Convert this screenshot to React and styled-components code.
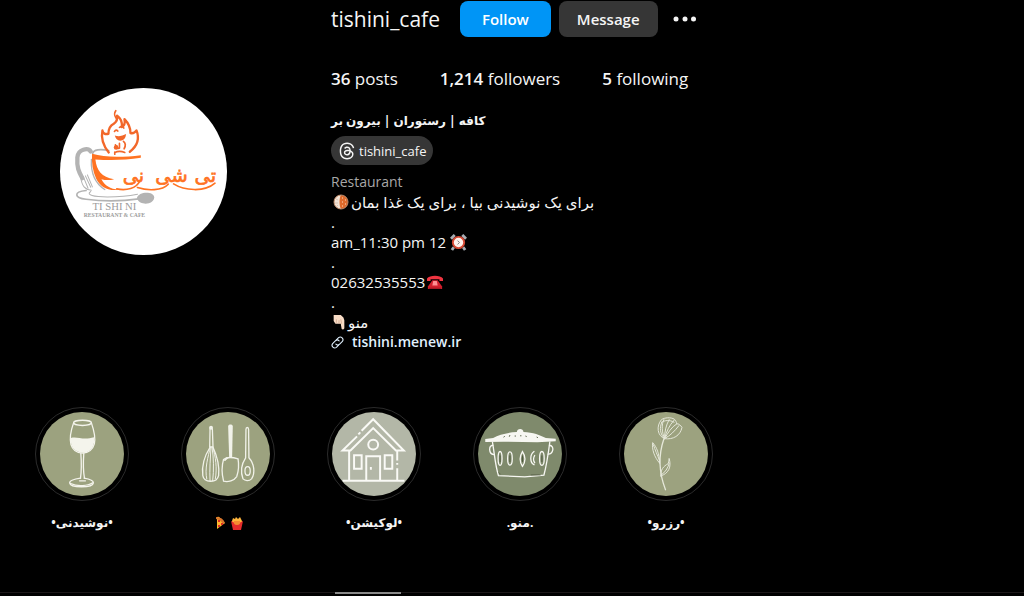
import React from "react";
import styled, { createGlobalStyle } from "styled-components";
import { FaThreads } from "react-icons/fa6";

const GlobalStyle = createGlobalStyle`
  * {
    box-sizing: border-box;
  }

  body {
    margin: 0;
    background: #000;
    color: #f5f5f5;
    font-family: "Open Sans", "Noto Sans", "DejaVu Sans", sans-serif;
    font-size: 15px;
    line-height: 20px;
  }
`;

const Page = styled.main`
  overflow: hidden;
`;

const Header = styled.header`
  display: flex;
  align-items: flex-start;
  padding-top: 1px;
`;

const AvatarColumn = styled.div`
  flex: 0 0 286px;
  display: flex;
  justify-content: center;
  margin: 87px 45px 0 0;
`;

const Avatar = styled.svg`
  width: 167px;
  height: 167px;
  border-radius: 50%;
  background: #fff;
`;

const Info = styled.section`
  flex: 1;
  min-width: 0;
`;

const TitleRow = styled.div`
  display: flex;
  align-items: center;
`;

const Username = styled.h2`
  margin: 0 20px 0 0;
  font-size: 21px;
  font-weight: 400;
  line-height: 36px;
`;

const Button = styled.button`
  height: 36px;
  margin-right: 8px;
  padding: 0 ${(props) => (props.$primary ? 22 : 18)}px;
  border: 0;
  border-radius: 8px;
  background: ${(props) => (props.$primary ? "#0095f6" : "#363636")};
  color: ${(props) => (props.$primary ? "#fff" : "#f5f5f5")};
  font: inherit;
  font-weight: 600;
  cursor: pointer;
`;

const MoreButton = styled.button`
  display: flex;
  align-items: center;
  height: 36px;
  padding: 0 6px;
  border: 0;
  background: none;
  color: #f5f5f5;
  cursor: pointer;
`;

const Stats = styled.ul`
  display: flex;
  gap: 42px;
  margin: 32px 0 0;
  padding: 0;
  list-style: none;
  font-size: 17px;
  line-height: 20px;
`;

const Count = styled.span`
  font-weight: 600;
`;

const Bio = styled.div`
  display: flex;
  flex-direction: column;
  align-items: flex-start;
  margin-top: 22px;
`;

const DisplayName = styled.h1`
  margin: 0;
  font-size: 12px;
  font-weight: 700;
  line-height: 20px;
`;

const ThreadsPill = styled.a`
  display: flex;
  align-items: center;
  gap: 3px;
  height: 29px;
  margin: 5px 0 7px;
  padding: 0 7px;
  border-radius: 15px;
  background: #363636;
  color: #f5f5f5;
  font-size: 13px;
  text-decoration: none;
`;

const Category = styled.div`
  color: #a8a8a8;
  font-size: 14px;
`;

const Line = styled.div`
  display: flex;
  align-items: center;
  gap: ${(props) => props.$gap || 2}px;
  height: 20px;
`;

const Emoji = styled.svg`
  flex: none;
  width: ${(props) => props.$size || 18}px;
  height: ${(props) => props.$size || 18}px;
`;

const SiteLink = styled.a`
  display: flex;
  align-items: center;
  gap: 8px;
  color: #e0f1ff;
  font-size: 14px;
  font-weight: 600;
  text-decoration: none;
`;

const Highlights = styled.ul`
  display: flex;
  margin: 55px 0 0;
  padding: 0 9px;
  list-style: none;
`;

const Highlight = styled.li`
  flex: 0 0 146px;
`;

const HighlightLink = styled.a`
  display: flex;
  flex-direction: column;
  align-items: center;
  gap: 12px;
  color: #f5f5f5;
  font-size: 12px;
  font-weight: 700;
  text-decoration: none;
`;

const Ring = styled.span`
  display: flex;
  padding: 4px;
  border: 1px solid #2b2b2b;
  border-radius: 50%;
`;

const Cover = styled.svg`
  width: 84px;
  height: 84px;
  border-radius: 50%;
  background: ${(props) => props.$color};
`;

const Label = styled.span`
  display: flex;
  align-items: center;
  gap: 3px;
  height: 20px;
`;

const Tabs = styled.nav`
  display: flex;
  margin-top: 59px;
  padding-left: 335px;
  border-top: 1px solid #1c1819;
`;

const ActiveTab = styled.span`
  width: 66px;
  height: 2px;
  margin-top: -1px;
  background: #8a8a8a;
`;

const Logo = () => (
  <Avatar viewBox="30 24 500 500" role="img" aria-label="tishini_cafe">
    <g fill="none" stroke="#b3b3b3" strokeLinecap="round">
      <path d="M122 214c-8-12-38-8-40 18-2 30 4 42 15 62" strokeWidth="13" />
      <path d="M92 292c4 26 12 36 32 38M100 290l14 34M106 287l16 34M112 284l15 36" strokeWidth="3" />
      <path d="M128 220c2-12 22-14 48-9" strokeWidth="5" />
      <path d="M124 238c-2 40 12 72 40 90" strokeWidth="4" />
      <path d="M108 331c-38 4-36 22 0 26 44 6 110 6 158-1" strokeWidth="5" />
      <path d="M122 334c-16 10 10 16 50 16 34 0 60-2 90-8" strokeWidth="3" />
    </g>
    <path d="M260 354c4-20 50-22 52-3 0 22-42 28-52 3z" fill="#b3b3b3" />
    <path
      d="M126 221c40 12 96 10 146 4v8c-46 7-90 8-136 5 4 34 18 52 56 59-14 4-26 3-38 0 10 20 26 28 52 32-36 4-56-10-68-34-10-22-14-48-12-74z"
      fill="#ff7322"
    />
    <g fill="none" stroke="#f2672a" strokeLinecap="round" strokeLinejoin="round">
      <path
        d="M176 217c-16-20-24-42-19-66 2 10 8 12 18 10 0-16 4-24 16-30 8-6 12-14 10-24 14 10 16 20 14 34 8-4 10-14 8-24 12 12 18 26 18 42 8 2 14-2 18-8 12 30-2 50-20 64"
        strokeWidth="7"
      />
      <path d="M197 92c-8 12-2 16 2 24" strokeWidth="5" />
      <path d="M193 154q5-7 10-1M208 142q8-5 13 2" strokeWidth="5" />
      <path d="M196 194q6 14 12 10v-14M220 184q10 8 2 22M194 217q14-6 30 0M194 216v6" strokeWidth="5" />
    </g>
    <path d="M194 166q16 6 34-4-2 20-18 20-12-2-16-16z" fill="#f2672a" />
    <circle cx="198" cy="202" r="7" fill="#f2672a" />
    <g fill="none" stroke="#ff7322" strokeLinecap="round" strokeWidth="5">
      <path d="M200 326c30 6 58-2 68-22" />
      <path d="M262 322c30 10 74 10 92-10M370 311c32 20 92 26 124-2" />
    </g>
    <g
      fill="#ff7322"
      stroke="#ff7322"
      strokeWidth="2"
      fontFamily="DejaVu Sans, sans-serif"
      fontSize="58"
      textAnchor="middle"
    >
      <text x="250" y="306">نی</text>
      <text x="364" y="306">شی</text>
      <text x="465" y="306">تی</text>
    </g>
    <g fill="#9b9b9b" fontFamily="Liberation Serif, serif" textAnchor="middle">
      <text x="193" y="390" fontSize="32">TI SHI NI</text>
      <text x="193" y="409" fontSize="17" fontWeight="700">RESTAURANT &amp; CAFE</text>
    </g>
  </Avatar>
);

const MoonCake = () => (
  <Emoji viewBox="0 0 18 18" aria-hidden="true">
    <circle cx="10" cy="9" r="7" fill="#dd6a2c" />
    <path d="M10 2a7 7 0 0 0 0 14c-2-3-2-11 0-14z" fill="#f3e4d7" />
    <path d="M5 6l2 1M4 10h3M6 13l1-1" stroke="#d9c3b2" />
    <path d="M11 5h1M14 7h1M11 9h1M14 11h1M11 13h1" stroke="#ffd9bd" />
    <circle cx="10" cy="9" r="7" fill="none" stroke="#b98a6c" />
  </Emoji>
);

const AlarmClock = () => (
  <Emoji viewBox="0 0 18 18" $size={17} aria-hidden="true">
    <path d="M1 5l4-4M17 5l-4-4M4 14l-2 3M14 14l2 3" stroke="#a8adb3" strokeWidth="3" />
    <circle cx="9" cy="9" r="6" fill="#fff3ee" stroke="#d64a35" strokeWidth="2" />
    <path d="M8 7l2 2-2 2" fill="none" stroke="#777" />
  </Emoji>
);

const Telephone = () => (
  <Emoji viewBox="0 0 18 18" $size={16} aria-hidden="true">
    <path d="M0 8V5c3-4 15-4 18 0v3h-4V6H4v2z" fill="#ef3440" />
    <path d="M6 7h6l5 7v3H1v-3z" fill="#d31e2c" />
    <path d="M7 8h4l1 5H6z" fill="#ff8d91" />
    <path d="M2 16h14" stroke="#8f1420" />
  </Emoji>
);

const PointDown = () => (
  <Emoji viewBox="0 0 16 18" $size={16} aria-hidden="true">
    <path d="M2 1h8l3 3 1 3v9q-1 2-3 1l-1-6H4L2 8z" fill="#f8dcc6" />
    <path d="M5 6v4M8 7v4M10 6l1 5" stroke="#d3ab90" fill="none" />
  </Emoji>
);

const Pizza = () => (
  <Emoji viewBox="0 0 14 14" $size={14} aria-hidden="true">
    <path d="M4 1q2-1 3 1l5 5-8 6z" fill="#ffb62e" />
    <path d="M3 1q7 0 9 6l-2 1Q8 4 3 3z" fill="#d9752c" />
    <path d="M5 4h2v2H5zM8 7h2v2H8zM5 9h2v2H5z" fill="#dc2c24" />
  </Emoji>
);

const Fries = () => (
  <Emoji viewBox="0 0 14 14" $size={14} aria-hidden="true">
    <path d="M2 5l1-3 2 1 1-2 2 2 2-2 1 2 1 2v3H2z" fill="#ffb53c" />
    <path d="M1 5q6 4 12 0l-2 9H3z" fill="#e62c2c" />
    <path d="M4 5h6q1 4-3 4T4 5z" fill="#f58b31" />
  </Emoji>
);

const ChainIcon = () => (
  <svg width="13" height="13" viewBox="0 0 24 24" fill="none" stroke="currentColor" aria-hidden="true">
    <g strokeWidth="2" strokeLinecap="round" strokeLinejoin="round">
      <path d="M10 7l4-4a5 5 0 0 1 7 7l-5 5a5 5 0 0 1-7 0" />
      <path d="M14 17l-4 4a5 5 0 0 1-7-7l5-5a5 5 0 0 1 7 0" />
    </g>
  </svg>
);

const WineGlass = () => (
  <Cover viewBox="30 33 255 255" $color="#9ca27f" aria-hidden="true">
    <g fill="none" stroke="#f4f4ec" strokeWidth="4" strokeLinecap="round">
      <ellipse cx="159" cy="66" rx="27" ry="8" />
      <path d="M132 66c-8 22-12 50-8 66 5 17 19 25 35 26 18-1 32-12 36-28 4-18-2-44-9-64" />
      <path d="M154 158c2 28 2 54-1 76M163 158c-2 28-2 54 2 76" />
      <path d="M153 234c-14 2-33 5-33 14 2 16 70 16 72 0 0-9-16-12-28-14" />
      <path d="M123 250c20 10 52 8 67-2M150 242h18" />
    </g>
    <path d="M124 112c18-6 36 8 70-2 4 32-14 46-35 47-24-3-38-19-35-45z" fill="#f4f4ec" />
  </Cover>
);

const Utensils = () => (
  <Cover viewBox="30 33 255 255" $color="#9ca27f" aria-hidden="true">
    <g fill="none" stroke="#f1f2e9" strokeWidth="3" strokeLinecap="round">
      <path d="M103 84l-1 55M110 84l2 55M103 139h9" strokeWidth="4" />
      <path d="M103 140c-14 22-26 55-22 86 4 22 42 24 48 0 3-30-5-60-17-86" strokeWidth="4" />
      <path d="M104 140c-7 28-18 66-11 96M106 140c-2 30-5 70-3 102M109 140c5 30 6 70 2 102M111 140c9 28 14 64 8 96" />
      <path d="M144 177c10-8 30-6 44-2 3 18 2 36-4 54-8 12-26 18-40 14-5-20-6-46 0-66z" strokeWidth="4" />
      <path d="M212 86c0-8 8-8 8 0l1 86c16 18 20 46 8 64-8 8-20 6-26 0-8-22-4-46 8-64z" strokeWidth="4" />
      <ellipse cx="217" cy="212" rx="8" ry="13" strokeWidth="4" />
    </g>
    <circle cx="106" cy="81" r="6" fill="#f1f2e9" />
    <path d="M158 77c0-8 14-8 14 0l-2 94h-9z" fill="#f1f2e9" />
    <path d="M144 180l9-10h8l-12 12z" fill="#f1f2e9" />
  </Cover>
);

const House = () => (
  <Cover viewBox="30 33 255 255" $color="#b3b7a7" aria-hidden="true">
    <g fill="none" stroke="#fafaf6" strokeWidth="6">
      <path d="M120 90l35-35 93 95h-24l-69-68-69 68H62l44-43M110 101l6-6" />
      <path d="M82 148v94M228 150v30M228 188v5M228 204v38M62 242h188" />
      <circle cx="155" cy="132" r="15" />
      <path d="M134 242v-75h42v75M97 164h23v41H97zM190 164h23v41h-23zM148 200v8" />
    </g>
  </Cover>
);

const Pot = () => (
  <Cover viewBox="30 33 255 255" $color="#7f8a6c" aria-hidden="true">
    <path d="M52 115l24-3c18-10 44-17 72-18 0-13 20-13 20 0 30 1 50 10 68 18l30 2v8l-56 3-104-2-54 1z" fill="#f7f7f2" />
    <g fill="none" stroke="#f7f7f2" strokeWidth="4" strokeLinecap="round">
      <path d="M74 125c6 34 8 68 18 101l80 4 58-5c9-34 14-70 18-101" />
      <path d="M75 134c-14 2-12 26 2 28M247 134c16 2 12 26-4 27" />
      <ellipse cx="97" cy="174" rx="6" ry="21" />
      <ellipse cx="127" cy="174" rx="7" ry="20" />
      <path d="M165 153q-14 22 0 45 15-23 0-45zM200 153c-14 10-12 34 0 40M202 165q-7 12 0 22" />
      <ellipse cx="224" cy="174" rx="7" ry="21" />
    </g>
    <path d="M97 165v20M127 165v20M165 165v20M224 165v20" stroke="#4d563e" strokeWidth="3" />
    <path d="M108 110l3-4M125 108l2-5M143 108v-4M160 107v-4M177 109l-2-4M208 109l4 2M92 217l6 4M190 224h30" stroke="#59634a" strokeWidth="3" />
  </Cover>
);

const Flower = () => (
  <Cover viewBox="30 33 255 255" $color="#9ca27f" aria-hidden="true">
    <g fill="none" stroke="#e6e8da" strokeWidth="3" strokeLinecap="round" strokeLinejoin="round">
      <path d="M153 114c-22-8-26-38-9-58 9-6 28-8 39-1 4 4 6 8 7 14 6-1 12 4 16 11-5 24-26 38-53 34z" />
      <path d="M153 114c-8-20-10-42-2-58M153 114c-14-14-16-34-8-50M153 114c0-20 4-40 14-58M153 114c6-22 14-40 29-56M153 114c12-20 20-34 37-45M153 114c18-10 30-22 44-40M144 64c10-6 24-8 38 0" />
      <path d="M151 115c-16 46-18 94 5 154" strokeWidth="4" />
      <path d="M138 188c-16-18-24-42-21-62 13 14 20 34 21 62zM119 132c6 18 12 32 18 46" />
      <path d="M142 227c-2-18 8-30 22-37 2-6 3-10 3-16 8 26-2 46-25 53zM143 224c12-8 20-20 24-34" />
    </g>
  </Cover>
);

const highlights = [
  { id: "drinks", cover: <WineGlass />, label: "•نوشیدنی•" },
  {
    id: "food",
    cover: <Utensils />,
    label: (
      <>
        <Pizza />
        <Fries />
      </>
    ),
  },
  { id: "location", cover: <House />, label: "•لوکیشن•" },
  { id: "menu", cover: <Pot />, label: ".منو." },
  { id: "reserve", cover: <Flower />, label: "•رزرو•" },
];

export default () => {
  return (
    <Page>
      <GlobalStyle />
      <Header>
        <AvatarColumn>
          <Logo />
        </AvatarColumn>
        <Info>
          <TitleRow>
            <Username>tishini_cafe</Username>
            <Button $primary>Follow</Button>
            <Button>Message</Button>
            <MoreButton aria-label="Options">
              <svg width="24" height="24" viewBox="0 0 24 24" fill="currentColor">
                <circle cx="4" cy="12" r="2.5" />
                <circle cx="13" cy="12" r="2.5" />
                <circle cx="21.5" cy="12" r="2.5" />
              </svg>
            </MoreButton>
          </TitleRow>
          <Stats>
            <li>
              <Count>36</Count> posts
            </li>
            <li>
              <Count>1,214</Count> followers
            </li>
            <li>
              <Count>5</Count> following
            </li>
          </Stats>
          <Bio>
            <DisplayName dir="rtl">کافه | رستوران | بیرون بر</DisplayName>
            <ThreadsPill href="#threads">
              <FaThreads size={18} />
              tishini_cafe
            </ThreadsPill>
            <Category>Restaurant</Category>
            <Line>
              <MoonCake />
              <span dir="rtl">برای یک نوشیدنی بیا ، برای یک غذا بمان</span>
            </Line>
            <Line>.</Line>
            <Line $gap={4}>
              am_11:30 pm 12 <AlarmClock />
            </Line>
            <Line>.</Line>
            <Line>
              02632535553
              <Telephone />
            </Line>
            <Line>.</Line>
            <Line $gap={1}>
              <PointDown />
              <span dir="rtl">منو</span>
            </Line>
            <SiteLink href="#site">
              <ChainIcon />
              tishini.menew.ir
            </SiteLink>
          </Bio>
        </Info>
      </Header>
      <Highlights>
        {highlights.map((item) => (
          <Highlight key={item.id}>
            <HighlightLink href={`#${item.id}`} aria-label={item.id}>
              <Ring>{item.cover}</Ring>
              <Label dir={item.id === "food" ? "ltr" : "rtl"}>{item.label}</Label>
            </HighlightLink>
          </Highlight>
        ))}
      </Highlights>
      <Tabs>
        <ActiveTab />
      </Tabs>
    </Page>
  );
};
